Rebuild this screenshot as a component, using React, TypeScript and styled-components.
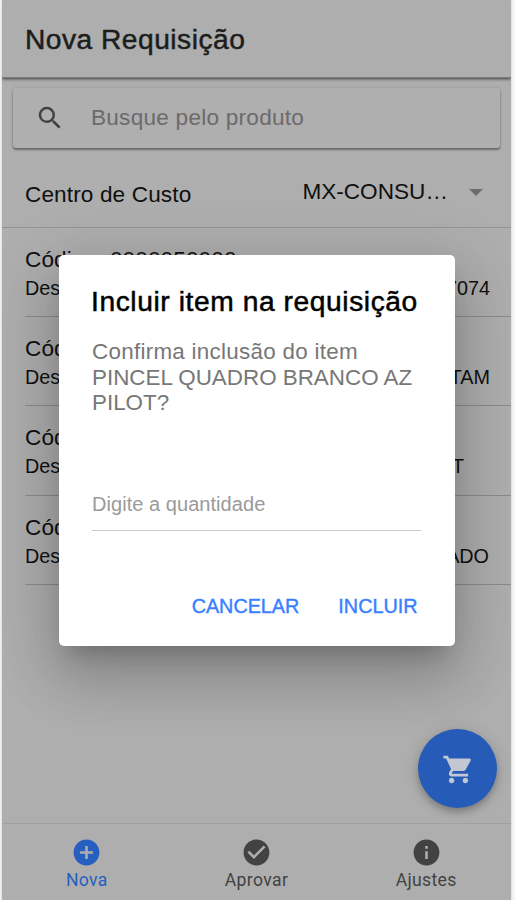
import React from "react";
import styled, { createGlobalStyle } from "styled-components";
import { MdSearch, MdShoppingCart, MdAddCircle, MdCheckCircle, MdInfo } from "react-icons/md";

const GlobalStyle = createGlobalStyle`
  * { box-sizing: border-box; }
  body { margin: 0; background: #f4f4f4; font-family: "Liberation Sans", Arial, sans-serif; }
  p, h1, h2 { margin: 0; font-weight: 400; }
`;

const Screen = styled.div`
  position: relative;
  display: flex;
  flex-direction: column;
  width: 509px;
  height: 900px;
  margin-left: 2px;
  background: #aeaeae;
  overflow: hidden;
  box-shadow: 0 0 2px #c4c4c4;
`;

const Header = styled.header`
  flex: none;
  height: 78px;
  padding: 0 23px;
  display: flex;
  align-items: center;
  z-index: 1;
  border-bottom: 1px solid #7c7c7c;
  box-shadow: 0 1px 3px rgba(0, 0, 0, 0.65);
`;

const Title = styled.h1`
  font-size: 28.2px;
  line-height: 36px;
  letter-spacing: 0.48px;
  color: #1d1d1d;
  -webkit-text-stroke: 0.5px #1d1d1d;
`;

const SearchBar = styled.div`
  flex: none;
  display: flex;
  align-items: center;
  height: 60px;
  margin: 10px 11px 1px;
  padding-left: 22px;
  gap: 26px;
  border-radius: 3px;
  background: #afafaf;
  box-shadow: 0 2px 2px rgba(0, 0, 0, 0.36), 0 0 3px rgba(0, 0, 0, 0.16);
  color: #6b6b6b;
  font-size: 22.6px;
  letter-spacing: 0.24px;
  svg { color: #404040; }
`;

const CostCenter = styled.div`
  flex: none;
  display: flex;
  height: 79px;
  padding: 0 28px 0 23px;
  border-bottom: 1px solid #949494;
  justify-content: space-between;
  font-size: 22.6px;
  line-height: 26px;
  color: #101010;
`;

const CostLabel = styled.span`
  padding-top: 33px;
  letter-spacing: 0.12px;
`;

const CostValue = styled.span`
  display: flex;
  gap: 21px;
  padding-top: 30px;
`;

const Caret = styled.i`
  margin-top: 10px;
  height: 0;
  border: 7px solid transparent;
  border-top-color: #6c6c6c;
  border-bottom: 0;
`;

const Row = styled.div<{ $tail: number }>`
  flex: none;
  height: 89.2px;
  margin-left: 23px;
  padding: 19px 21px 0 0;
  border-bottom: 1px solid #8b8b8b;
  color: #101010;
  h2 { font-size: 22.6px; line-height: 26px; letter-spacing: 0.1px; }
  div {
    display: flex;
    justify-content: space-between;
    font-size: 19.8px;
    line-height: 24px;
    margin-top: 3px;
    padding-right: ${(p) => p.$tail}px;
    white-space: nowrap;
  }
`;

const TabBar = styled.nav`
  flex: none;
  display: flex;
  height: 77px;
  margin-top: auto;
  border-top: 1px solid #a0a0a0;
`;

const Tab = styled.div<{ $active?: boolean }>`
  flex: 1;
  display: flex;
  flex-direction: column;
  align-items: center;
  padding-top: 13px;
  color: ${(p) => (p.$active ? "#275fc1" : "#424242")};
  font: 17.6px/22px Roboto, sans-serif;
  letter-spacing: 0.35px;
  svg { flex: none; margin-bottom: 1px; }
`;

const Fab = styled.button`
  position: absolute;
  right: 14px;
  top: 729px;
  width: 79px;
  height: 79px;
  padding: 2px 0 0 1px;
  border: 0;
  border-radius: 50%;
  display: flex;
  align-items: center;
  justify-content: center;
  background: #265bb7;
  color: #c2c7d2;
  box-shadow: 0 4px 7px rgba(0, 0, 0, 0.24), 0 1px 18px rgba(0, 0, 0, 0.1);
`;

const Dialog = styled.section`
  position: absolute;
  z-index: 2;
  left: 56.5px;
  top: 255px;
  width: 396px;
  height: 391px;
  padding: 30px 34px 0 32.5px;
  border-radius: 5px;
  background: #fff;
  box-shadow: 0 16px 21px -10px rgba(0, 0, 0, 0.2), 0 34px 54px 4px rgba(0, 0, 0, 0.14),
    0 13px 65px 11px rgba(0, 0, 0, 0.12);
`;

const DialogTitle = styled.h2`
  font-size: 28.2px;
  line-height: 32px;
  letter-spacing: 0.58px;
  white-space: nowrap;
  color: #000;
  -webkit-text-stroke: 0.5px #000;
`;

const Message = styled.p`
  margin: 22px 0 0 1px;
  font-size: 22.4px;
  line-height: 25.5px;
  color: #777;
`;

const Question = styled.span`
  letter-spacing: 0.28px;
`;

const Quantity = styled.div`
  margin: 64px 0 0 1px;
  height: 51px;
  padding-top: 12px;
  border-bottom: 1px solid #c9c9c9;
  font-size: 20px;
  line-height: 24px;
  letter-spacing: 0.05px;
  color: #9a9a9a;
`;

const Actions = styled.div`
  display: flex;
  justify-content: flex-end;
  gap: 39px;
  margin-top: 63px;
  padding-right: 3px;
`;

const Action = styled.button`
  padding: 0;
  border: 0;
  background: none;
  font: 19.8px/24px "Liberation Sans", Arial, sans-serif;
  color: #3880ff;
  -webkit-text-stroke: 0.4px #3880ff;
`;

const rows = [
  { code: "0000050000", end: "17074", tail: 0 },
  { code: "0000050001", end: "ESTAM", tail: 0 },
  { code: "0000050002", end: "PILOT", tail: 26 },
  { code: "0000050003", end: "DOURADO", tail: 1 },
];

export default function App() {
  return (
    <>
      <GlobalStyle />
      <Screen>
        <Header><Title>Nova Requisição</Title></Header>
        <SearchBar><MdSearch size={30} />Busque pelo produto</SearchBar>
        <CostCenter>
          <CostLabel>Centro de Custo</CostLabel>
          <CostValue>MX-CONSU…<Caret /></CostValue>
        </CostCenter>
        {rows.map((r) => (
          <Row key={r.code} $tail={r.tail}>
            <h2>Código: {r.code}</h2>
            <div><span>Descrição:</span><span>{r.end}</span></div>
          </Row>
        ))}
        <TabBar>
          <Tab $active><MdAddCircle size={31} />Nova</Tab>
          <Tab><MdCheckCircle size={31} />Aprovar</Tab>
          <Tab><MdInfo size={31} />Ajustes</Tab>
        </TabBar>
        <Fab aria-label="Carrinho"><MdShoppingCart size={33} /></Fab>
        <Dialog role="dialog">
          <DialogTitle>Incluir item na requisição</DialogTitle>
          <Message><Question>Confirma inclusão do item</Question><br />PINCEL QUADRO BRANCO AZ<br />PILOT?</Message>
          <Quantity>Digite a quantidade</Quantity>
          <Actions><Action>CANCELAR</Action><Action>INCLUIR</Action></Actions>
        </Dialog>
      </Screen>
    </>
  );
}
